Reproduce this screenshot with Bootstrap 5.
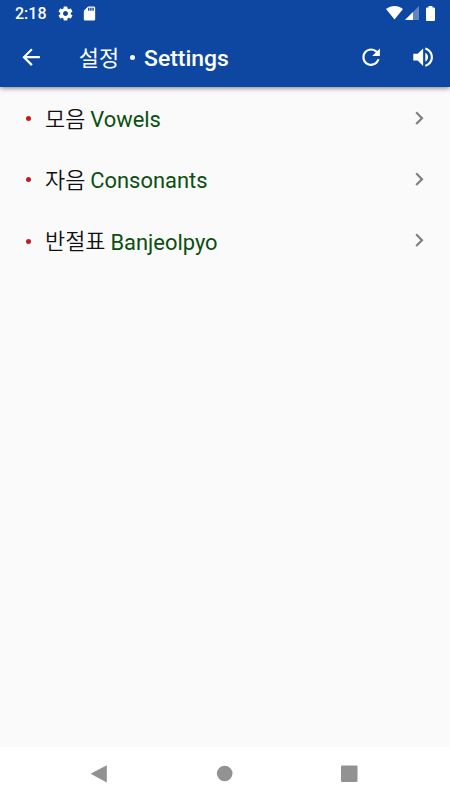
<!DOCTYPE html>
<html lang="ko">
<head>
<meta charset="utf-8">
<meta name="viewport" content="width=device-width, initial-scale=1">
<title>설정・Settings</title>
<link href="https://cdn.jsdelivr.net/npm/bootstrap@5.3.0/dist/css/bootstrap.min.css" rel="stylesheet">
<style>
body{background:#fafafa;font-family:Roboto,"Noto Sans CJK KR",sans-serif;height:800px;overflow:hidden}
.app-head{background:#0d47a1;height:87px;box-shadow:0 1px 5px rgba(0,0,0,.5);z-index:1}
.status-row{height:26px;padding:0 14.500px 0 15px;font-size:16px;font-weight:500}
.status-row span{line-height:26px;padding-top:2px;width:31px}
.gear-ico{margin-left:11px}
.card-ico{margin-left:7px}
.signal-ico{margin-left:2px}
.battery-ico{margin:0 1px 0 7px}
.tool-row{height:62px;padding:0 13.500px 0 17.500px}
.ico{width:26.25px;height:26.25px;fill:#fff;flex:none}
.speaker-ico{margin-left:26px}
.head-title{font-size:21.900px;font-weight:500;line-height:30px;margin-left:35px;white-space:nowrap}
.head-title .en-title{font-size:22.900px;padding-top:3px}
.head-title .ko{font-weight:400}
.head-dot{width:5px;height:5px;margin:1px 9px 0 11px}
.setting-row{height:61.250px;padding:0 17.500px 0 26px;font-size:21.900px;line-height:32px;white-space:nowrap;color:#111}
.row-dot{width:5px;height:5px;background:#c41c1c;margin:2px 14px 0 0}
.ko{font-family:"Noto Sans CJK KR",sans-serif}
.setting-row .ko{font-weight:350}
.en{color:#0b4f10;margin-left:5px;padding-top:5px}
.setting-row .ico{fill:#808080}
.sys-nav{height:53px}
</style>
<script src="https://cdn.jsdelivr.net/npm/bootstrap@5.3.0/dist/js/bootstrap.bundle.min.js"></script>
</head>
<body class="d-flex flex-column m-0">
<header class="app-head text-white position-relative flex-shrink-0">
  <div class="status-row d-flex align-items-center">
    <span>2:18</span>
    <svg class="gear-ico" width="17" height="17" viewBox="0 0 24 24" fill="#fff"><path d="M19.43 12.98c.04-.32.07-.64.07-.98s-.03-.66-.07-.98l2.11-1.65c.19-.15.24-.42.12-.64l-2-3.46c-.12-.22-.39-.3-.61-.22l-2.49 1c-.52-.4-1.08-.73-1.69-.98l-.38-2.65C14.46 2.18 14.25 2 14 2h-4c-.25 0-.46.18-.49.42l-.38 2.65c-.61.25-1.17.59-1.69.98l-2.49-1c-.23-.09-.49 0-.61.22l-2 3.46c-.13.22-.07.49.12.64l2.11 1.65c-.04.32-.07.65-.07.98s.03.66.07.98l-2.11 1.65c-.19.15-.24.42-.12.64l2 3.46c.12.22.39.3.61.22l2.49-1c.52.4 1.08.73 1.69.98l.38 2.65c.03.24.24.42.49.42h4c.25 0 .46-.18.49-.42l.38-2.65c.61-.25 1.17-.59 1.69-.98l2.49 1c.23.09.49 0 .61-.22l2-3.46c.12-.22.07-.49-.12-.64l-2.11-1.65zM12 15.5c-1.93 0-3.5-1.57-3.5-3.5s1.57-3.5 3.5-3.5 3.5 1.57 3.5 3.5-1.57 3.5-3.5 3.5z"/></svg>
    <svg class="card-ico" width="17" height="17" viewBox="0 0 24 24" fill="#fff"><path d="M18 2h-8L4.02 8 4 20c0 1.1.9 2 2 2h12c1.1 0 2-.9 2-2V4c0-1.1-.9-2-2-2zm-6 6h-2V4h2v4zm3 0h-2V4h2v4zm3 0h-2V4h2v4z"/></svg>
    <svg class="ms-auto" width="17" height="14" viewBox="0 0 17 14" fill="#fff"><path d="M0 3C5-1 12-1 17 3L8.500 13.500z"/></svg>
    <svg class="signal-ico" width="14" height="14" viewBox="0 0 14 14" fill="#fff"><path opacity=".35" d="M0 14L14 0V14z"/><path d="M0 14L8 6V14z"/></svg>
    <svg class="battery-ico" width="9" height="15" viewBox="0 0 9 15" fill="#fff"><path d="M2.500 0h4v1.500H8a1 1 0 0 1 1 1V14a1 1 0 0 1-1 1H1a1 1 0 0 1-1-1V2.500a1 1 0 0 1 1-1h1.500z"/></svg>
  </div>
  <div class="tool-row d-flex align-items-center">
    <svg class="ico" viewBox="0 0 24 24"><path d="M20 11H7.830l5.590-5.590L12 4l-8 8 8 8 1.410-1.410L7.830 13H20v-2z"/></svg>
    <div class="head-title d-flex align-items-center"><span class="ko">설정</span><i class="head-dot rounded-circle bg-white"></i><span class="en-title">Settings</span></div>
    <svg class="ico ms-auto" viewBox="0 0 24 24"><path d="M17.650 6.350C16.200 4.900 14.210 4 12 4c-4.420 0-7.990 3.580-7.990 8s3.570 8 7.990 8c3.730 0 6.840-2.550 7.730-6h-2.080c-.82 2.330-3.040 4-5.650 4-3.310 0-6-2.690-6-6s2.690-6 6-6c1.660 0 3.140.69 4.220 1.780L13 11h7V4l-2.350 2.350z"/></svg>
    <svg class="ico speaker-ico" viewBox="0 0 24 24"><path d="M3 9v6h4l5 5V4L7 9H3zm13.500 3c0-1.770-1.020-3.290-2.500-4.030v8.050c1.480-.73 2.500-2.250 2.500-4.020zM14 3.230v2.060c2.890.86 5 3.540 5 6.710s-2.110 5.850-5 6.710v2.060c4.010-.91 7-4.490 7-8.770s-2.990-7.860-7-8.770z"/></svg>
  </div>
</header>
<main class="flex-grow-1">
  <div class="setting-row d-flex align-items-center"><i class="row-dot rounded-circle"></i><span class="ko">모음</span><span class="en">Vowels</span><svg class="ico ms-auto" viewBox="0 0 24 24"><path d="M10 6L8.590 7.410 13.170 12l-4.580 4.590L10 18l6-6z"/></svg></div>
  <div class="setting-row d-flex align-items-center"><i class="row-dot rounded-circle"></i><span class="ko">자음</span><span class="en">Consonants</span><svg class="ico ms-auto" viewBox="0 0 24 24"><path d="M10 6L8.590 7.410 13.170 12l-4.580 4.590L10 18l6-6z"/></svg></div>
  <div class="setting-row d-flex align-items-center"><i class="row-dot rounded-circle"></i><span class="ko">반절표</span><span class="en">Banjeolpyo</span><svg class="ico ms-auto" viewBox="0 0 24 24"><path d="M10 6L8.590 7.410 13.170 12l-4.580 4.590L10 18l6-6z"/></svg></div>
</main>
<nav class="sys-nav bg-white flex-shrink-0">
  <svg class="d-block" width="450" height="53" viewBox="0 0 450 53" fill="#929292"><path d="M106.800 18.200v17.200L91.500 27.300q-.8-.5 0-1z"/><circle cx="224.700" cy="26.500" r="7.800"/><rect x="341" y="18.500" width="16.500" height="16.500" rx="1"/></svg>
</nav>
</body>
</html>
